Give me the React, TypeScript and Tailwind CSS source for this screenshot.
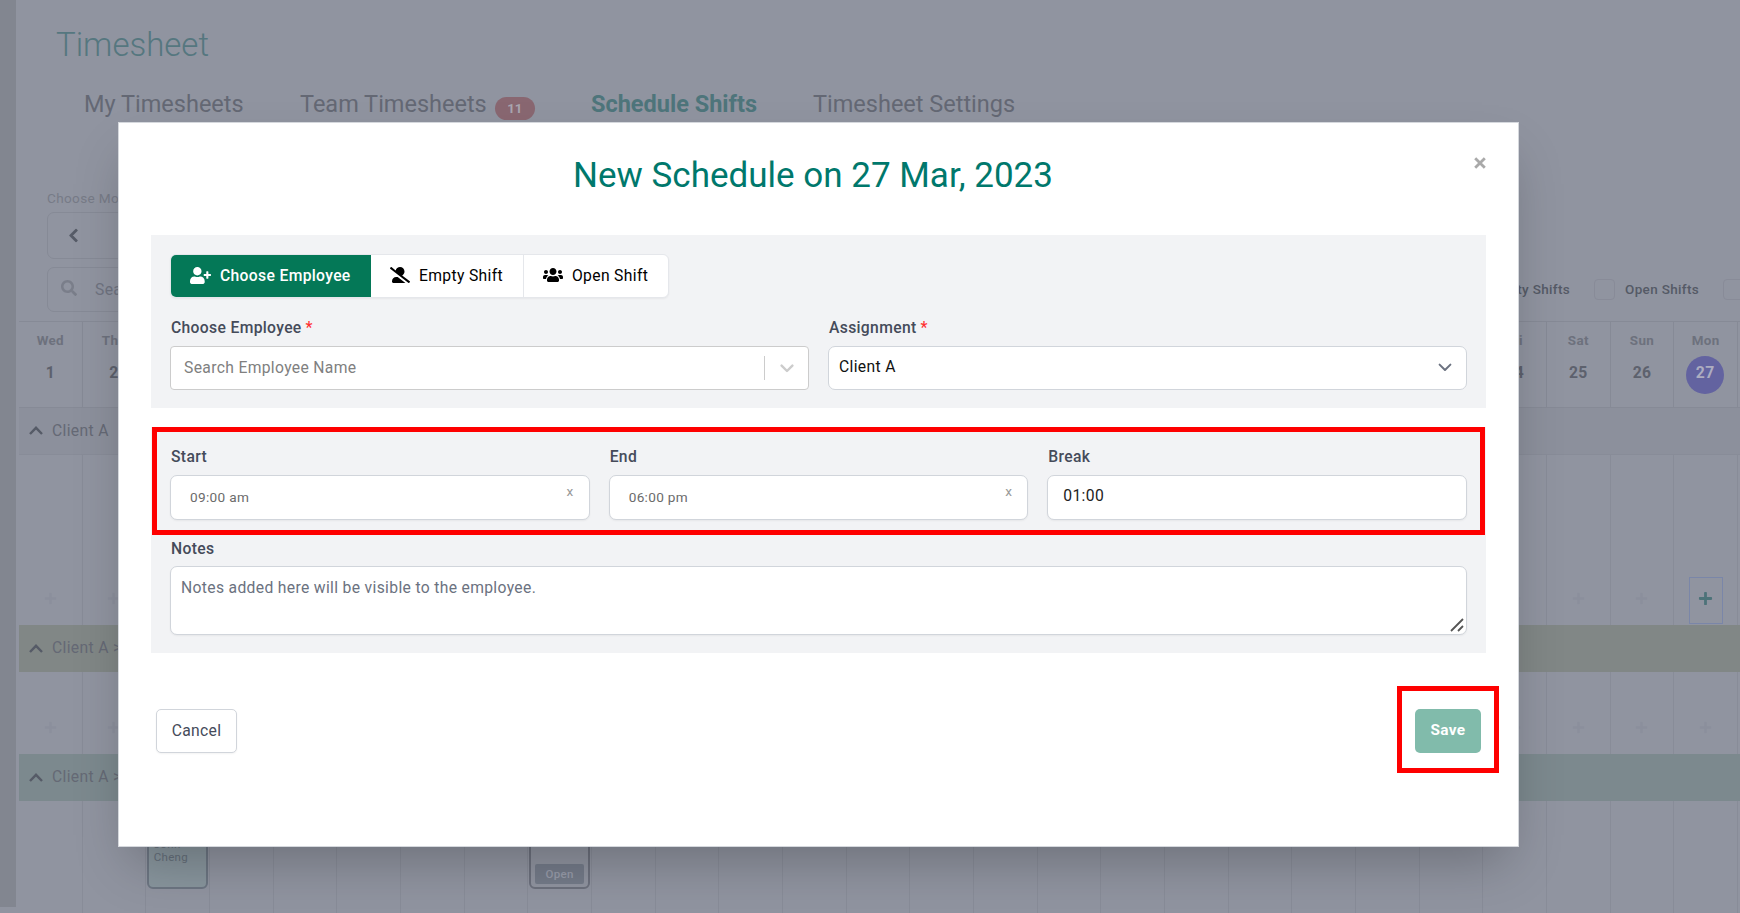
import React from 'react';
import { FaChevronLeft, FaPlus, FaSearch, FaUserAltSlash, FaUserPlus, FaUsers } from 'react-icons/fa';

const weekdays = ['Wed', 'Thu', 'Fri', 'Sat', 'Sun', 'Mon', 'Tue'];

const days = Array.from({ length: 27 }, (_, i) => ({
  day: i + 1,
  name: weekdays[i % 7],
}));

const SELECTED_DAY = 27;

const ChevronUp = () => (
  <svg width="14" height="9" viewBox="0 0 14 9" fill="none" stroke="#565b67" strokeWidth="2.4">
    <path d="M1 8 7 1.8 13 8" />
  </svg>
);

const ChevronDown = ({ color, width = 2 }: { color: string; width?: number }) => (
  <svg width="14" height="9" viewBox="0 0 14 9" fill="none" stroke={color} strokeWidth={width} strokeLinecap="round" strokeLinejoin="round">
    <path d="M1.6 1.6 7 7 12.4 1.6" />
  </svg>
);

const GroupRow = ({ label, className }: { label: string; className: string }) => (
  <div className={`flex h-[47px] shrink-0 items-center pb-px pl-[10px] text-[#656975] ${className}`}>
    <ChevronUp />
    <span className="ml-[9px] whitespace-nowrap text-[15.7px] leading-5">{label}</span>
  </div>
);

type CellRowProps = {
  className: string;
  plus?: boolean;
  selectable?: boolean;
  children?: (day: number) => React.ReactNode;
};

const CellRow = ({ className, plus, selectable, children }: CellRowProps) => (
  <div className={`grid w-[1719px] shrink-0 grid-cols-27 ${className}`}>
    {days.map(({ day }) => (
      <div key={day} className="flex flex-col items-center justify-end border-r border-[#888c98]">
        {children?.(day)}
        {plus &&
          (selectable && day === SELECTED_DAY ? (
            <div className="mb-px flex h-[47px] w-[34px] items-center justify-center border border-[#7a86a8] pb-[4px]">
              <FaPlus size={15} color="#4d7379" />
            </div>
          ) : (
            <FaPlus size={13} color="#8b8f9c" className="mb-5" />
          ))}
      </div>
    ))}
  </div>
);

const Checkbox = ({ label }: { label?: string }) => (
  <div className="flex items-center">
    <div className="h-[21px] w-[21px] rounded-[4px] border border-[#888b98]" />
    {label && (
      <span className="ml-[10px] whitespace-nowrap text-[13.5px] font-medium text-[#555a66]">{label}</span>
    )}
  </div>
);

const Background = () => (
  <div className="flex h-[913px] w-[1740px] overflow-hidden bg-[#9094a0]">
    <aside className="h-[907px] w-4 shrink-0 bg-[#828690]" />
    <main className="flex min-w-0 flex-1 flex-col overflow-hidden pl-[3px]">
      <h1 className="h-[88px] shrink-0 pt-[24px] pl-[37px] text-[33px] leading-[42px] font-light tracking-normal text-[#55777f]">
        Timesheet
      </h1>
      <nav className="flex h-[102px] shrink-0 pl-[65px] text-[23.5px] leading-[33px] tracking-normal text-[#646874]">
        <span className="w-[216px]">My Timesheets</span>
        <span className="flex w-[291px]">
          Team Timesheets
          <span className="mt-[9px] ml-[8px] flex h-[23px] w-10 items-center justify-center rounded-full bg-[#896771] text-[13.2px] font-bold text-[#a9a6b0]">
            11
          </span>
        </span>
        <span className="w-[222px] font-bold text-[#4e757b]">Schedule Shifts</span>
        <span>Timesheet Settings</span>
      </nav>
      <div className="shrink-0 pl-[28px] text-[13.6px] leading-[16px] text-[#777b87]">Choose Month</div>
      <div className="mt-[6px] ml-[28px] flex h-[47px] w-[320px] shrink-0 items-center rounded-[7px] border border-[#868a96] pl-[18px]">
        <FaChevronLeft size={15} color="#565b67" stroke="#565b67" strokeWidth={24} />
      </div>
      <div className="mt-[8px] flex h-[45px] shrink-0 justify-between pl-[28px]">
        <div className="flex w-[320px] items-center rounded-[7px] border border-[#868a96] pl-[13px]">
          <FaSearch size={16} color="#7a7e8a" className="mb-1" />
          <span className="ml-[18px] text-[15.7px] text-[#6f7380]">Search</span>
        </div>
        <div className="-mr-1 flex items-center gap-6 pb-px">
          <Checkbox label="Empty Shifts" />
          <Checkbox label="Open Shifts" />
          <Checkbox />
        </div>
      </div>

      <div className="mt-[9px] h-[87px] shrink-0 border-y border-[#868a96]">
        <div className="grid h-full w-[1719px] grid-cols-27">
          {days.map(({ day, name }) => (
            <div key={day} className="flex flex-col items-center border-r border-[#868a96] pt-[9px] font-bold">
              <span className="text-[13.4px] leading-5 text-[#6d717d]">{name}</span>
              {day === SELECTED_DAY ? (
                <span className="mt-[5px] mr-px flex h-[38px] w-[38px] justify-center rounded-full bg-[#6363a0] text-[15.7px] leading-[34px] text-[#adadc0]">
                  {day}
                </span>
              ) : (
                <span className="mt-[12px] text-[15.7px] leading-5 text-[#5d616d]">{day}</span>
              )}
            </div>
          ))}
        </div>
      </div>
      <GroupRow label="Client A" className="border-b border-[#888c98] bg-[#8c909c]" />
      <CellRow className="h-[170px]" plus selectable />
      <GroupRow label="Client A > Team 1" className="bg-[#818786]" />
      <CellRow className="h-[82px]" plus />
      <GroupRow label="Client A > Team 2" className="bg-[#7c898e]" />
      <CellRow className="h-[112px]">
        {(day) => (
          <>
            {day === 3 && (
              <div className="mr-px mb-[24px] h-[70px] w-[61px] rounded-[6px] border-2 border-[#6c7582] bg-[#88959d] pt-[17px] pl-[5px] text-[11.5px] leading-[13px] text-[#656f7a]">
                John
                <br />
                Cheng
              </div>
            )}
            {day === 9 && (
              <div className="mb-[24px] flex h-[70px] w-[61px] items-end rounded-[6px] border-2 border-[#6c707d] px-1 pb-[3px]">
                <span className="h-[20px] w-full rounded-[2px] bg-[#747b89] text-center text-[11.5px] leading-5 font-medium text-[#989ca9]">
                  Open
                </span>
              </div>
            )}
          </>
        )}
      </CellRow>
    </main>
  </div>
);

const Label = ({ children, required }: { children: React.ReactNode; required?: boolean }) => (
  <label className="flex gap-[4px] pl-px text-[15.7px] leading-5 font-medium text-[#454b5a]">
    <span>{children}</span>
    {required && <span className="text-[#ff3030]">*</span>}
  </label>
);

const TimeField = ({ label, value }: { label: string; value: string }) => (
  <div>
    <Label>{label}</Label>
    <div className="mt-2 flex h-[45px] justify-between rounded-[7px] border border-[#d1d5db] bg-white pr-[15px] pl-[19px] text-[13.6px] text-[#6b6b6b] shadow-xs">
      <span className="pt-[11px] leading-5">{value}</span>
      <span className="pt-[5px] leading-5 text-[#999]">x</span>
    </div>
  </div>
);

const NewScheduleModal = () => (
  <div className="absolute top-[122px] left-[118px] h-[725px] w-[1401px] border border-[#d5d8dd] bg-white px-8 shadow-2xl">
    <button className="absolute top-[34px] right-[32px]" aria-label="Close">
      <svg width="12" height="12" viewBox="0 0 12 12" stroke="#a9a9a9" strokeWidth="2.8">
        <path d="M1.2 1.2 10.8 10.8M10.8 1.2 1.2 10.8" />
      </svg>
    </button>
    <h2 className="h-[112px] pt-[31px] pr-[11px] text-center text-[35px] leading-[44px] tracking-normal text-[#00786c]">
      New Schedule on 27 Mar, 2023
    </h2>

    <section className="h-[173px] bg-[#f2f3f5] px-[19px] pt-[19px]">
      <div className="flex h-[44px] w-[499px] overflow-hidden rounded-[6px] border border-[#e5e7eb] bg-white text-[15.7px] font-medium text-black shadow-xs">
        <button className="flex w-[200px] items-center bg-[#047857] pl-[19px] text-white">
          <FaUserPlus size={21} className="mr-[9px] mb-px" />
          <span className="pb-px">Choose Employee</span>
        </button>
        <button className="flex w-[153px] items-center rounded-l-[6px] border-r border-[#e5e7eb] pl-[19px] font-normal">
          <FaUserAltSlash size={20} className="mr-[9px] mb-[2px]" />
          <span className="pb-px">Empty Shift</span>
        </button>
        <button className="flex flex-1 items-center pl-[19px] font-normal">
          <FaUsers size={20} className="mr-[9px] mb-[2px]" />
          <span className="pb-px">Open Shift</span>
        </button>
      </div>
      <div className="mt-5 grid grid-cols-2 gap-[19px]">
        <div>
          <Label required>Choose Employee</Label>
          <div className="mt-2 flex h-[44px] items-center rounded-[4px] border border-[#ccc] bg-white pl-[13px] text-[15.7px] text-[#808080]">
            <span className="flex-1">Search Employee Name</span>
            <span className="h-6 w-px bg-[#ccc]" />
            <span className="flex w-[43px] justify-center">
              <ChevronDown color="#ccc" width={2.4} />
            </span>
          </div>
        </div>
        <div>
          <Label required>Assignment</Label>
          <div className="mt-2 flex h-[44px] items-center justify-between rounded-[7px] border border-[#d1d5db] bg-white pr-[14px] pl-[10px] text-[15.7px] text-[#111]">
            <span className="pb-[2px]">Client A</span>
            <span className="pb-[2px]">
              <ChevronDown color="#6b7280" />
            </span>
          </div>
        </div>
      </div>
    </section>

    <section className="mt-[19px] h-[226px] bg-[#f2f3f5] px-[19px] pt-5">
      <div className="grid grid-cols-3 gap-[19px]">
        <TimeField label="Start" value="09:00 am" />
        <TimeField label="End" value="06:00 pm" />
        <div>
          <Label>Break</Label>
          <div className="mt-2 h-[45px] rounded-[7px] border border-[#d1d5db] bg-white pt-[10px] pl-[15px] text-[15.7px] leading-5 text-[#222] shadow-xs">
            01:00
          </div>
        </div>
      </div>
      <div className="mt-[19px]">
        <Label>Notes</Label>
        <div className="relative mt-[7px] h-[69px] rounded-[7px] border border-[#d1d5db] bg-white pt-[11px] pl-[10px] text-[15.7px] leading-5 text-[#6b7280] shadow-xs">
          Notes added here will be visible to the employee.
          <svg className="absolute right-[2px] bottom-[2px]" width="14" height="14" viewBox="0 0 14 14" stroke="#555" strokeWidth="1.8">
            <path d="M1 13 13 1M8 13 13 8" />
          </svg>
        </div>
      </div>
    </section>

    <footer className="mt-[56px] flex justify-between pr-[5px] pl-[5px] text-[15.7px]">
      <button className="h-[44px] w-[81px] rounded-[5px] border border-[#d1d5db] bg-white pb-px text-[#454b5a] shadow-xs">Cancel</button>
      <button className="h-[44px] w-[66px] rounded-[5px] bg-[#81bbab] pb-px text-[15.4px] font-bold text-white">Save</button>
    </footer>
  </div>
);

export default function App() {
  return (
    <div className="relative h-[913px] w-[1740px] overflow-hidden font-['Roboto',sans-serif] tracking-[0.33px]">
      <Background />
      <NewScheduleModal />
      {/* highlight frames */}
      <div className="absolute top-[427px] left-[152px] h-[108px] w-[1333px] border-[5px] border-[#fe0000]" />
      <div className="absolute top-[686px] left-[1397px] h-[87px] w-[102px] border-[5px] border-[#fe0000]" />
    </div>
  );
}
